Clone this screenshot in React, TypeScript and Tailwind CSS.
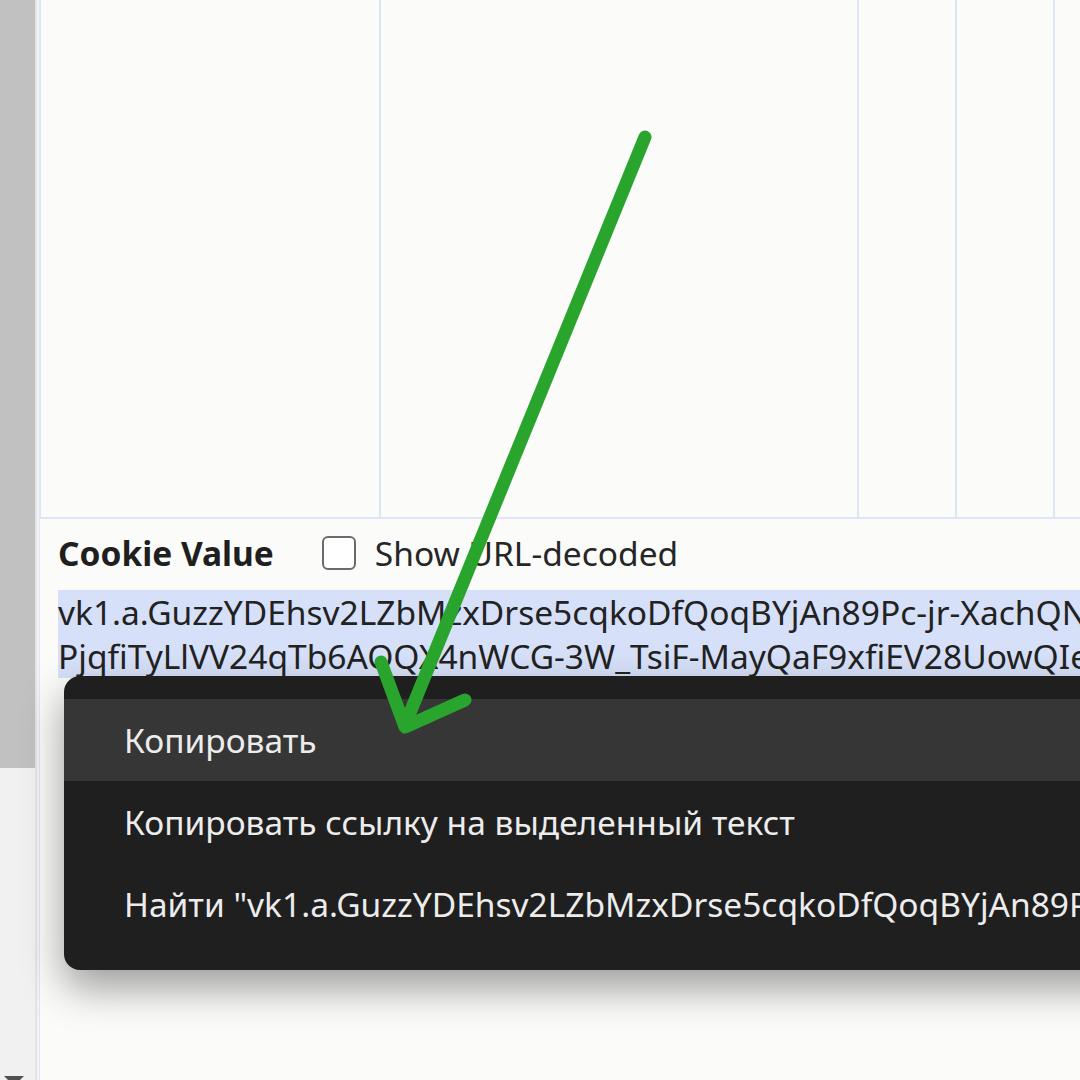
import React from "react";

const font = { fontFamily: '"Noto Sans", "Open Sans", sans-serif' };

const valueLine1 = "vk1.a.GuzzYDEhsv2LZbMzxDrse5cqkoDfQoqBYjAn89Pc-jr-XachQNbV2sLkq";
const valueLine2 = "PjqfiTyLlVV24qTb6AQQX4nWCG-3W_TsiF-MayQaF9xfiEV28UowQIeRt7";

const menuItems = [
  { label: "Копировать", active: true },
  { label: "Копировать ссылку на выделенный текст", active: false },
  { label: 'Найти "vk1.a.GuzzYDEhsv2LZbMzxDrse5cqkoDfQoqBYjAn89Pc-jr-XachQN..."', active: false },
];

const Arrow: React.FC = () => (
  <svg className="absolute left-0 top-0 pointer-events-none" width="1080" height="1080" viewBox="0 0 1080 1080">
    <g stroke="#29a52e" strokeWidth="13" strokeLinecap="round" strokeLinejoin="round" fill="none">
      <path d="M645 137 L405 725" />
      <path d="M381 662 L405 727 L465 700" />
    </g>
  </svg>
);

export default function App() {
  return (
    <div className="relative w-[1080px] h-[1080px] overflow-hidden flex bg-[#fbfbf9]" style={font}>
      {/* scrollbar strip */}
      <div className="w-[35px] flex flex-col bg-[#f1f1f1] relative">
        <div className="h-[768px] bg-[#c1c1c1]" />
        <div className="absolute left-[4px] bottom-[-6px] w-0 h-0 border-l-[10px] border-r-[10px] border-t-[10px] border-l-transparent border-r-transparent border-t-[#505050]" />
      </div>
      <div className="w-[2px] bg-[#e4e4e4]" />
      <div className="w-[2px] bg-[#f3f3f3]" />

      <div className="flex-1 flex flex-col min-w-0">
        {/* table area */}
        <div className="h-[519px] flex border-b-2 border-[#dde5f6]">
          <div className="w-[2px] bg-[#dde5f6]" />
          <div className="w-[340px] border-r-2 border-[#dde5f6]" />
          <div className="w-[478px] border-r-2 border-[#dde5f6]" />
          <div className="w-[98px] border-r-2 border-[#dde5f6]" />
          <div className="w-[98px] border-r-2 border-[#dde5f6]" />
          <div className="flex-1" />
        </div>

        {/* cookie value panel */}
        <div className="flex-1 flex border-l border-[#dde5f6] overflow-hidden">
          <div className="pl-[18px] pt-[16px] flex flex-col min-w-0">
            <div className="flex items-center h-[36px] whitespace-nowrap">
              <span className="text-[33.5px] font-bold text-[#1f1f1f]">Cookie Value</span>
              <span className="ml-[48px] shrink-0 w-[34px] h-[34px] rounded-[6px] border-2 border-[#6b6b6b] bg-white" />
              <span className="ml-[19px] text-[33.5px] text-[#262626]">Show URL-decoded</span>
            </div>
            <div className="mt-[19px] text-[33.5px] leading-[44px] text-[#222] whitespace-nowrap">
              <div className="bg-[#d6e0f8] w-max pr-2">{valueLine1}</div>
              <div className="bg-[#d6e0f8] w-max pr-2">{valueLine2}</div>
            </div>
          </div>
        </div>
      </div>

      {/* context menu */}
      <div className="absolute left-[64px] top-[676px] w-[1080px] h-[294px] rounded-[16px] bg-[#1f1f1f] py-[23px] shadow-[0_18px_40px_rgba(0,0,0,0.38)] overflow-hidden">
        {menuItems.map((item) => (
          <div
            key={item.label}
            className={`h-[82px] flex items-center pl-[60px] text-[33.5px] text-[#ececec] whitespace-nowrap ${item.active ? "bg-[#363636]" : ""}`}
          >
            {item.label}
          </div>
        ))}
      </div>

      <Arrow />
    </div>
  );
}
